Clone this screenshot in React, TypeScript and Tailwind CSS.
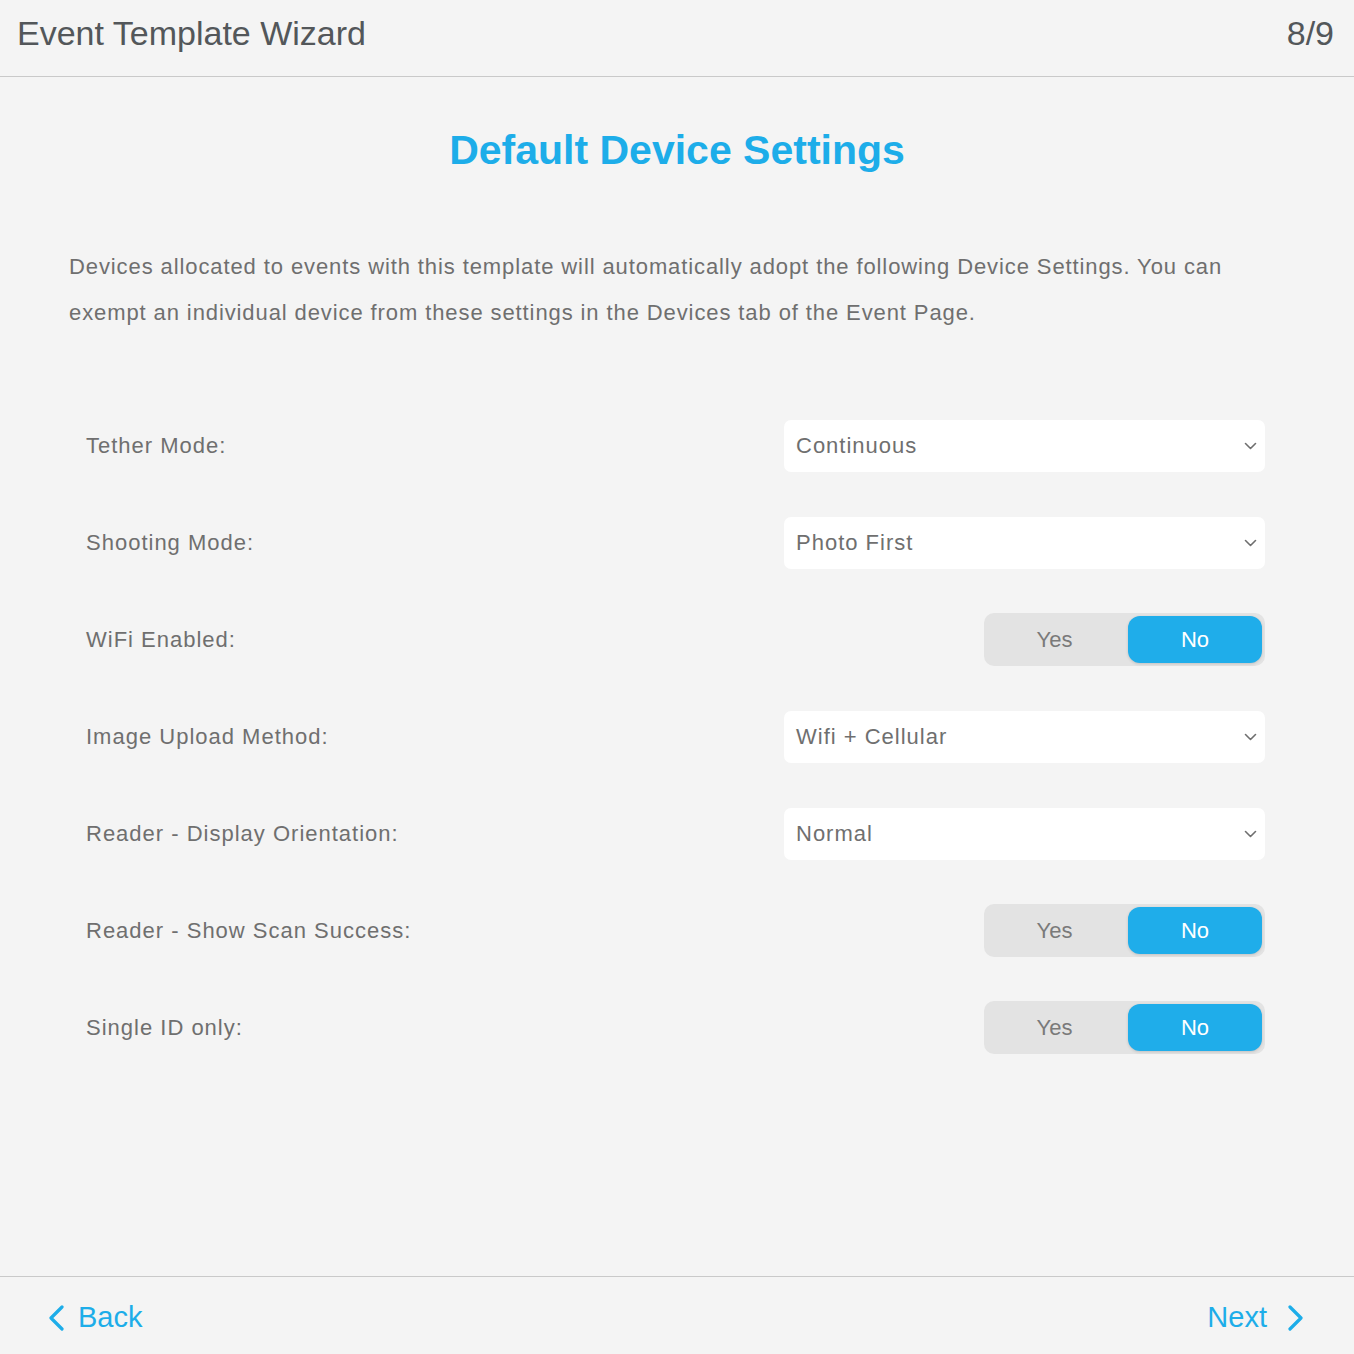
import React from 'react';

const font = { fontFamily: '"Liberation Sans", Arial, Helvetica, sans-serif' };

type Row =
  | { label: string; kind: 'select'; value: string }
  | { label: string; kind: 'toggle'; value: boolean };

const rows: Row[] = [
  { label: 'Tether Mode:', kind: 'select', value: 'Continuous' },
  { label: 'Shooting Mode:', kind: 'select', value: 'Photo First' },
  { label: 'WiFi Enabled:', kind: 'toggle', value: false },
  { label: 'Image Upload Method:', kind: 'select', value: 'Wifi + Cellular' },
  { label: 'Reader - Display Orientation:', kind: 'select', value: 'Normal' },
  { label: 'Reader - Show Scan Success:', kind: 'toggle', value: false },
  { label: 'Single ID only:', kind: 'toggle', value: false },
];

const SelectBox: React.FC<{ value: string }> = ({ value }) => (
  <div className="flex items-center justify-between w-[481px] h-[52px] bg-white rounded-[7px] pl-3 pr-[8px]">
    <span className="text-[22px] tracking-[1px] text-[#6f6f6f]">{value}</span>
    <svg width="13" height="8" viewBox="0 0 13 8" fill="none">
      <path d="M1.5 1.5 L6.5 6.5 L11.5 1.5" stroke="#6f6f6f" strokeWidth="1.6" strokeLinecap="round" strokeLinejoin="round" />
    </svg>
  </div>
);

const Toggle: React.FC<{ value: boolean }> = ({ value }) => (
  <div className="flex w-[281px] h-[53px] bg-[#e3e3e3] rounded-[10px] p-[3px]">
    <div
      className={
        value
          ? 'flex-1 flex items-center justify-center pr-[6px] rounded-[12px] bg-[#1fadea] text-white text-[22px] shadow-[0_1px_3px_rgba(0,0,0,0.15)]'
          : 'flex-1 flex items-center justify-center pr-[6px] text-[22px] text-[#7a7a7a]'
      }
    >
      Yes
    </div>
    <div
      className={
        !value
          ? 'w-[134px] flex items-center justify-center rounded-[12px] bg-[#1fadea] text-white text-[22px] shadow-[0_1px_3px_rgba(0,0,0,0.15)]'
          : 'w-[134px] flex items-center justify-center text-[22px] text-[#7a7a7a]'
      }
    >
      No
    </div>
  </div>
);

export default function App() {
  return (
    <div className="flex flex-col h-[1354px] w-full bg-[#f4f4f4]" style={font}>
      <header className="flex items-center justify-between h-[77px] px-[17px] pr-[20px] border-b border-[#c9c9c9] shrink-0">
        <h1 className="text-[34px] text-[#53575a] leading-none -mt-[11px]">Event Template Wizard</h1>
        <span className="text-[34px] text-[#53575a] leading-none -mt-[11px]">8/9</span>
      </header>

      <main className="flex-1 flex flex-col">
        <h2 className="mt-[49px] text-center text-[41px] leading-[48px] font-bold text-[#1dade9]">
          Default Device Settings
        </h2>
        <p className="mt-[70px] px-[69px] text-[22px] leading-[46px] tracking-[0.9px] text-[#6f6f6f]">
          Devices allocated to events with this template will automatically adopt the following Device Settings. You can
          exempt an individual device from these settings in the Devices tab of the Event Page.
        </p>

        <div className="mt-[83px] ml-[86px] mr-[89px] flex flex-col gap-[44px]">
          {rows.map((r) => (
            <div key={r.label} className="flex items-center justify-between h-[53px]">
              <span className="text-[22px] tracking-[1px] text-[#6f6f6f]">{r.label}</span>
              {r.kind === 'select' ? <SelectBox value={r.value} /> : <Toggle value={r.value} />}
            </div>
          ))}
        </div>
      </main>

      <footer className="flex items-center justify-between h-[78px] border-t border-[#c9c9c9] shrink-0 pl-[48px] pr-[50px] pt-[5px]">
        <button className="flex items-center gap-[13px] text-[29px] text-[#1dade9]">
          <svg width="17" height="26" viewBox="0 0 17 26" fill="none">
            <path d="M14 2 L3 13 L14 24" stroke="#1dade9" strokeWidth="3.2" strokeLinecap="round" strokeLinejoin="round" />
          </svg>
          Back
        </button>
        <button className="flex items-center gap-[20px] text-[29px] text-[#1dade9]">
          Next
          <svg width="17" height="26" viewBox="0 0 17 26" fill="none">
            <path d="M3 2 L14 13 L3 24" stroke="#1dade9" strokeWidth="3.2" strokeLinecap="round" strokeLinejoin="round" />
          </svg>
        </button>
      </footer>
    </div>
  );
}
